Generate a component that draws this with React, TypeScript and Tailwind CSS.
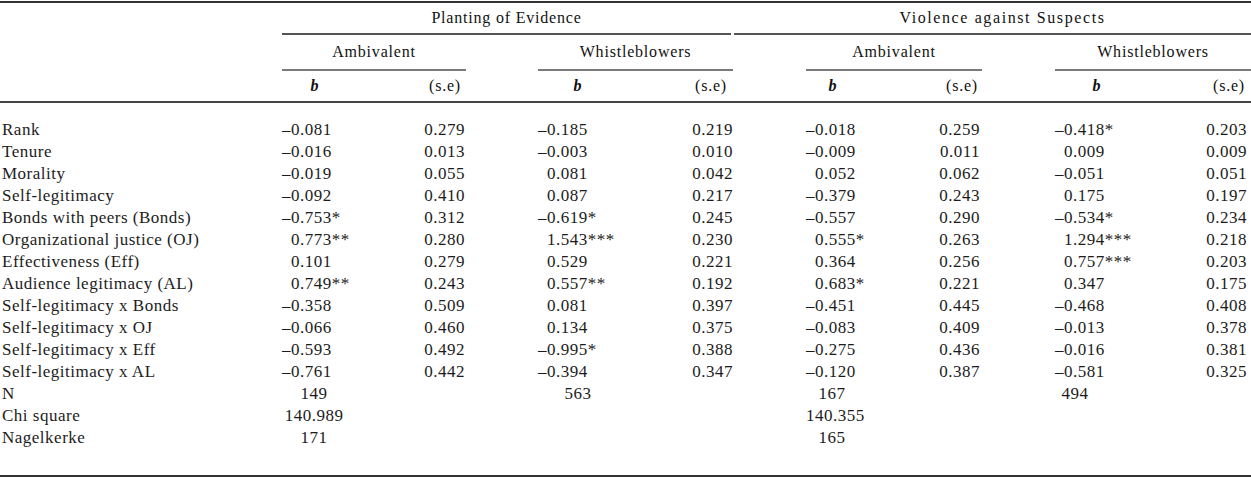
const groups = [
  { bBox: 'w-[66px]', nBox: 'w-[64px]', sePad: 'pr-[5px]', valPad: 'pr-[1px]' },
  { bBox: 'w-[80px]', nBox: 'w-[80px]', sePad: 'pr-[6px]', valPad: 'pr-[0px]' },
  { bBox: 'w-[54px]', nBox: 'w-[52px]', sePad: 'pr-[4px]', valPad: 'pr-[2px]' },
  { bBox: 'w-[84px]', nBox: 'w-[40px]', sePad: 'pr-[6px]', valPad: 'pr-[4px]' },
];

const colStart = ['col-start-2', 'col-start-4', 'col-start-6', 'col-start-8'];

type Cell = [string, string] | null;

const rows: { label: string; cells: Cell[] }[] = [
  { label: 'Rank', cells: [['–0.081', '0.279'], ['–0.185', '0.219'], ['–0.018', '0.259'], ['–0.418*', '0.203']] },
  { label: 'Tenure', cells: [['–0.016', '0.013'], ['–0.003', '0.010'], ['–0.009', '0.011'], ['0.009', '0.009']] },
  { label: 'Morality', cells: [['–0.019', '0.055'], ['0.081', '0.042'], ['0.052', '0.062'], ['–0.051', '0.051']] },
  { label: 'Self-legitimacy', cells: [['–0.092', '0.410'], ['0.087', '0.217'], ['–0.379', '0.243'], ['0.175', '0.197']] },
  { label: 'Bonds with peers (Bonds)', cells: [['–0.753*', '0.312'], ['–0.619*', '0.245'], ['–0.557', '0.290'], ['–0.534*', '0.234']] },
  { label: 'Organizational justice (OJ)', cells: [['0.773**', '0.280'], ['1.543***', '0.230'], ['0.555*', '0.263'], ['1.294***', '0.218']] },
  { label: 'Effectiveness (Eff)', cells: [['0.101', '0.279'], ['0.529', '0.221'], ['0.364', '0.256'], ['0.757***', '0.203']] },
  { label: 'Audience legitimacy (AL)', cells: [['0.749**', '0.243'], ['0.557**', '0.192'], ['0.683*', '0.221'], ['0.347', '0.175']] },
  { label: 'Self-legitimacy x Bonds', cells: [['–0.358', '0.509'], ['0.081', '0.397'], ['–0.451', '0.445'], ['–0.468', '0.408']] },
  { label: 'Self-legitimacy x OJ', cells: [['–0.066', '0.460'], ['0.134', '0.375'], ['–0.083', '0.409'], ['–0.013', '0.378']] },
  { label: 'Self-legitimacy x Eff', cells: [['–0.593', '0.492'], ['–0.995*', '0.388'], ['–0.275', '0.436'], ['–0.016', '0.381']] },
  { label: 'Self-legitimacy x AL', cells: [['–0.761', '0.442'], ['–0.394', '0.347'], ['–0.120', '0.387'], ['–0.581', '0.325']] },
];

const summary: { label: string; values: (string | null)[] }[] = [
  { label: 'N', values: ['149', '563', '167', '494'] },
  { label: 'Chi square', values: ['140.989', null, '140.355', null] },
  { label: 'Nagelkerke', values: ['171', null, '165', null] },
];

const grid = 'grid grid-cols-[282px_184px_72px_195px_73px_176px_73px_196px]';

export default function App() {
  return (
    <div
      className="w-[1251px] h-[479px] bg-white text-[#1c1c1c] text-[17px] tracking-[0.5px] overflow-hidden"
      style={{ fontFamily: '"Liberation Serif", "Times New Roman", serif' }}
    >
      <div className="mt-[1px] h-[2px] bg-[#333]" />

      {/* group headers */}
      <div className={`${grid} text-[16px] tracking-[0.8px] text-[#111]`}>
        <div className="col-start-2 col-span-3 mr-[2px] flex flex-col">
          <div className="h-[30px] flex items-center justify-center">Planting of Evidence</div>
          <div className="h-[2px] bg-[#555]" />
        </div>
        <div className="col-start-5 col-span-4 ml-[1px] flex flex-col">
          <div className="h-[30px] flex items-center justify-center pl-[20px] tracking-[1.6px]">
            Violence against Suspects
          </div>
          <div className="h-[2px] bg-[#555]" />
        </div>
      </div>

      <div className={`${grid} text-[16px] tracking-[0.8px] text-[#111]`}>
        {['Ambivalent', 'Whistleblowers', 'Ambivalent', 'Whistleblowers'].map((name, i) => (
          <div key={i} className={`${colStart[i]} flex flex-col`}>
            <div className="h-[34px] flex items-center justify-center">{name}</div>
            <div className="h-[2px] bg-[#7a7a7a]" />
          </div>
        ))}
      </div>

      <div className={`${grid} h-[30px] text-[16px] tracking-[0.8px] text-[#111]`}>
        {groups.map((g, i) => (
          <div key={i} className={`${colStart[i]} flex items-center justify-between ${g.sePad}`}>
            <span className={`${g.bBox} text-center font-bold italic`}>b</span>
            <span>(s.e)</span>
          </div>
        ))}
      </div>
      <div className="h-[2px] bg-[#444]" />

      {/* body */}
      <div className="pt-[14px] pb-[28px]">
        {rows.map((row) => (
          <div key={row.label} className={`${grid} h-[22px] items-center`}>
            <div className="pl-[2px] whitespace-nowrap">{row.label}</div>
            {row.cells.map((cell, i) =>
              cell ? (
                <div key={i} className={`${colStart[i]} flex justify-between ${groups[i].valPad}`}>
                  <span className={cell[0].startsWith('–') ? '' : 'pl-[9px]'}>{cell[0]}</span>
                  <span>{cell[1]}</span>
                </div>
              ) : null
            )}
          </div>
        ))}
        {summary.map((row) => (
          <div key={row.label} className={`${grid} h-[22px] items-center`}>
            <div className="pl-[2px] whitespace-nowrap">{row.label}</div>
            {row.values.map((v, i) =>
              v ? (
                <div key={i} className={`${colStart[i]} flex`}>
                  <span className={`${groups[i].nBox} text-center whitespace-nowrap`}>{v}</span>
                </div>
              ) : null
            )}
          </div>
        ))}
      </div>
      <div className="h-[2px] bg-[#333]" />
    </div>
  );
}
